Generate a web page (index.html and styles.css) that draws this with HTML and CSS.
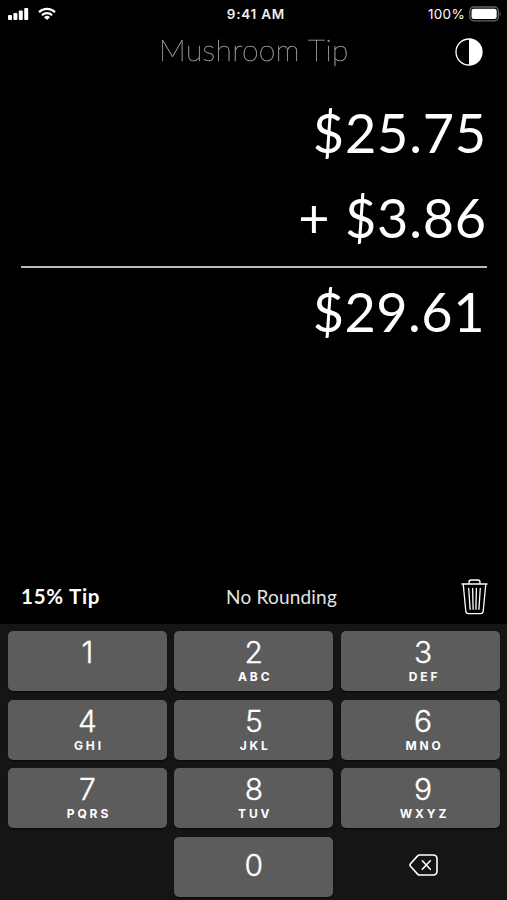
FILE: index.html
```html
<!DOCTYPE html>
<html lang="en">
<head>
<meta charset="utf-8">
<title>Mushroom Tip</title>
<link rel="stylesheet" href="styles.css">
</head>
<body>
<div class="app">
  <div class="status">
    <div class="status-left">
      <svg width="21" height="14" viewBox="0 0 21 14" fill="#fff"><rect x="0" y="8" width="4" height="5" rx="1"/><rect x="5.4" y="6" width="4" height="7" rx="1"/><rect x="10.8" y="3.4" width="4" height="9.6" rx="1"/><rect x="16.2" y="1" width="4" height="12" rx="1"/></svg>
      <svg width="18" height="14" viewBox="0 0 18 14" fill="none" stroke="#fff" stroke-width="2.2"><path d="M1 5.1a11.6 11.6 0 0 1 16 0M3.9 8.2a7.4 7.4 0 0 1 10.2 0"/><path d="M9 13L6 10.2a4.3 4.3 0 0 1 6 0z" fill="#fff" stroke="none"/></svg>
    </div>
    <div class="time">9:41 AM</div>
    <div class="status-right">
      <span class="percent">100%</span>
      <svg width="33" height="16" viewBox="0 0 33 16"><rect x=".8" y="1" width="28.6" height="13.8" rx="4" fill="none" stroke="#666" stroke-width="1.3"/><rect x="2.5" y="2.8" width="25.2" height="10.2" rx="2.2" fill="#fff"/><path d="M30.8 5.5q2 2.4 0 4.8z" fill="#666"/></svg>
    </div>
  </div>
  <header class="header">
    <h1>Mushroom Tip</h1>
    <svg class="contrast" width="28" height="28" viewBox="0 0 28 28"><circle cx="14" cy="14" r="13" fill="none" stroke="#fff" stroke-width="1.3"/><path d="M14 1a13 13 0 0 1 0 26z" fill="#fff"/></svg>
  </header>
  <main class="amounts">
    <div class="amount">$25.75</div>
    <div class="amount tip-amount">+ $3.86</div>
    <div class="amount total">$29.61</div>
  </main>
  <div class="toolbar">
    <div class="tip">15% Tip</div>
    <div class="rounding">No Rounding</div>
    <svg class="trash" width="27" height="36" viewBox="0 0 27 36" fill="none" stroke="#fff" stroke-width="1.3" stroke-linecap="round" stroke-linejoin="round"><path d="M1 5h25M8 4.7V3.2Q8 1 10.2 1h6.6Q19 1 19 3.2v1.5M2.2 5l2.6 27.2Q5 34.6 7.4 34.6h12.2q2.4 0 2.6-2.4L24.8 5M7.7 9.3l1.4 21M11.6 9.3l.5 21M15.4 9.3l-.5 21M19.3 9.3l-1.4 21"/></svg>
  </div>
  <div class="keypad">
    <div class="key"><b>1</b></div>
    <div class="key"><b>2</b><small>ABC</small></div>
    <div class="key"><b>3</b><small>DEF</small></div>
    <div class="key"><b>4</b><small>GHI</small></div>
    <div class="key"><b>5</b><small>JKL</small></div>
    <div class="key"><b>6</b><small>MNO</small></div>
    <div class="key"><b>7</b><small>PQRS</small></div>
    <div class="key"><b>8</b><small>TUV</small></div>
    <div class="key"><b>9</b><small>WXYZ</small></div>
    <div class="blank"></div>
    <div class="key zero"><b>0</b></div>
    <div class="delete"><svg width="29" height="22" viewBox="0 0 29 22" fill="none" stroke="#fff" stroke-width="1.6" stroke-linecap="round" stroke-linejoin="round"><path d="M10.6 1H24q4 0 4 4v12q0 4-4 4H10.6q-1.2 0-2-.9L1.5 12.2q-1-1.2 0-2.4l7.1-7.9q.8-.9 2-.9zM13.3 6.8l8 8.4M21.3 6.8l-8 8.4"/></svg></div>
  </div>
</div>
</body>
</html>
```
FILE: styles.css
```css
* { box-sizing: border-box; }
body { margin: 0; background: #000; color: #fff; font-family: Lato, sans-serif; -webkit-font-smoothing: antialiased; }
svg { display: block; flex: none; }
.app { display: flex; flex-direction: column; width: 507px; height: 900px; overflow: hidden; }
.status { display: grid; grid-template-columns: 1fr auto 1fr; align-items: center; height: 27px; padding: 0 4px 0 8px; font-family: Inter, sans-serif; }
.status-left { display: flex; gap: 9px; }
.time { font-size: 13.5px; font-weight: 600; letter-spacing: .75px; margin-right: -.75px; color: #eee; }
.status-right { display: flex; justify-content: flex-end; align-items: center; gap: 4px; margin-right: 1px; }
.percent { font-size: 13.5px; letter-spacing: .3px; }
.header { display: grid; grid-template-columns: 1fr auto 1fr; align-items: center; height: 50px; padding: 0 24px 0 25px; }
.header h1 { grid-column: 2; margin: -7px 0 0; font-size: 30px; font-weight: 100; line-height: 36px; letter-spacing: .4px; color: #999; -webkit-text-stroke: .5px #999; will-change: transform; }
.contrast { justify-self: end; }
.amounts { flex: 1; padding: 13px 20px 0 21px; }
.amount { height: 85px; font-size: 54px; line-height: 85px; letter-spacing: .8px; text-align: right; }
.tip-amount { height: 84px; }
.total { height: 90px; border-top: 2px solid #bbb; line-height: 88px; padding-right: 2px; margin-top: 7px; letter-spacing: .5px; }
.toolbar { display: grid; grid-template-columns: 205px 1fr auto; align-items: center; height: 54px; padding: 0 19px 0 21px; }
.tip { font-size: 20.5px; font-weight: 700; letter-spacing: .75px; margin-top: -2px; }
.rounding { font-size: 19px; letter-spacing: .2px; color: #e4e4e4; margin-top: -2px; }
.trash { justify-self: end; }
.keypad { display: grid; grid-template-columns: repeat(3, 159px); grid-auto-rows: 60px; gap: 8.5px 7.3px; height: 276px; padding: 7px 8px 0; background: #151515; font-family: Inter, sans-serif; }
.key { display: flex; flex-direction: column; align-items: center; padding-top: 5px; background: #5c5c5c; border-radius: 5px; box-shadow: 0 1px 1px #080808; }
.key:nth-child(3n) { padding-left: 6px; }
.key b { font-size: 30px; line-height: 33px; font-weight: 300; -webkit-text-stroke: .35px #fff; }
.key small { font-size: 12px; line-height: 16px; font-weight: 700; letter-spacing: 2.9px; margin-right: -2.9px; }
.zero { padding-top: 12px; }
.delete { display: flex; align-items: center; justify-content: center; padding-left: 7px; padding-bottom: 3px; }
```
